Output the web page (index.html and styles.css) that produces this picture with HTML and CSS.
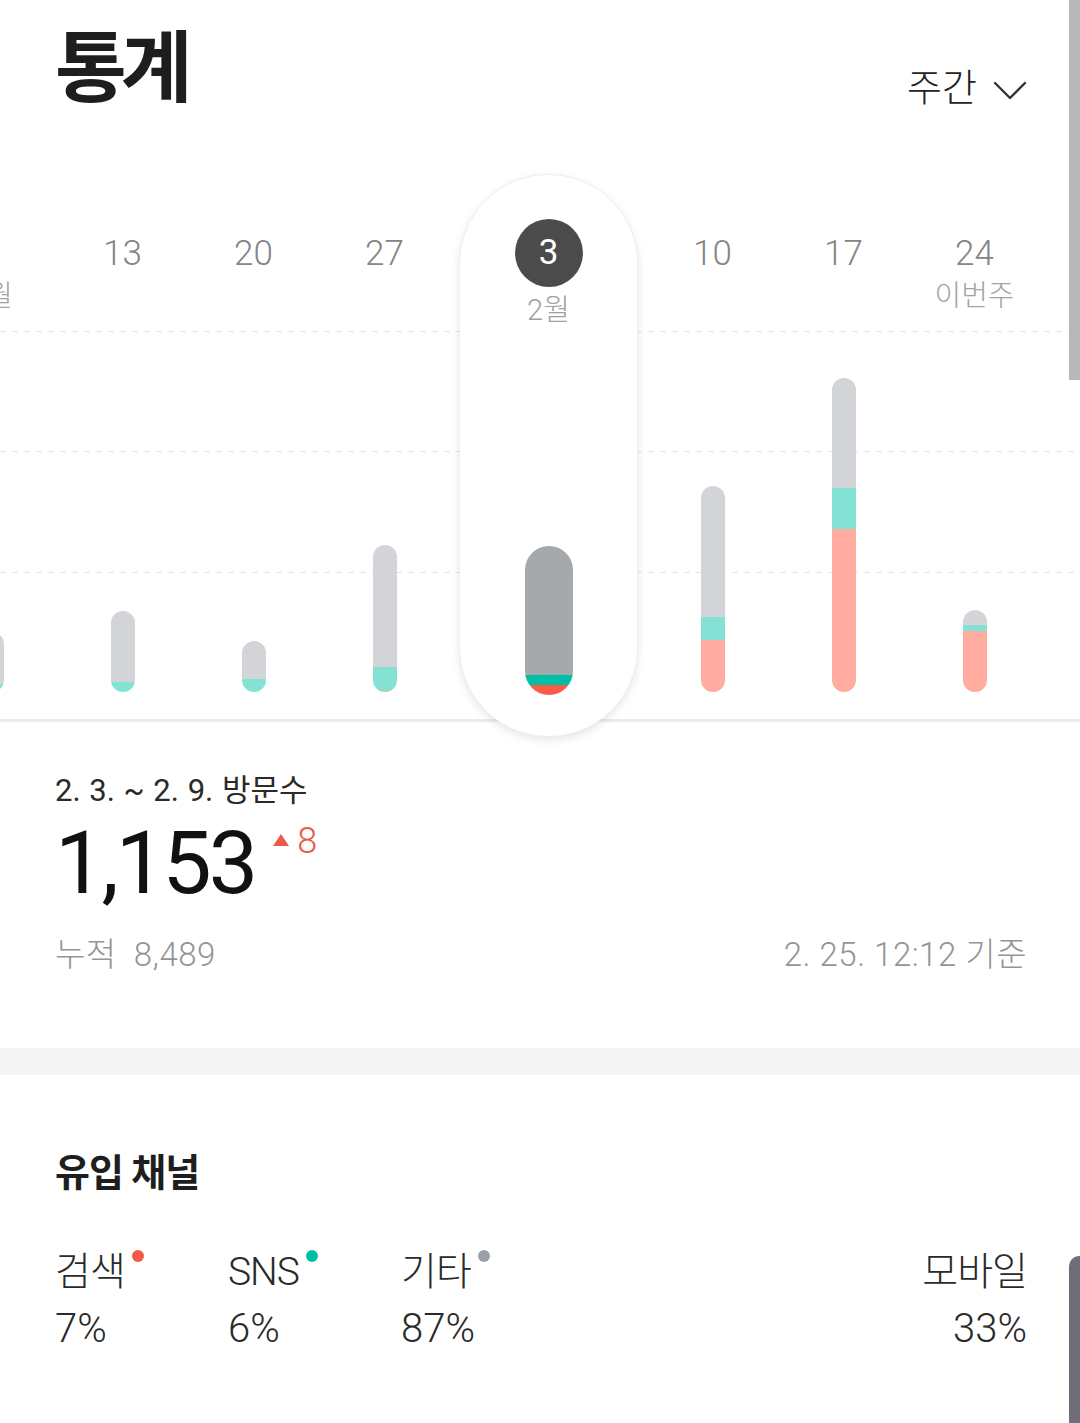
FILE: index.html
```html
<!DOCTYPE html>
<html lang="ko">
<head>
    <meta charset="UTF-8">
    <meta name="viewport" content="width=device-width, initial-scale=1.0">
    <title>통계</title>
    <link rel="stylesheet" href="styles.css">
</head>
<body>
    <header class="top">
        <h1 class="title">통계</h1>
        <button class="period">
            주간
            <svg class="chevron" width="34" height="20" viewBox="0 0 34 20">
                <polyline points="2,2 17,17 32,2" fill="none" stroke="#333" stroke-width="2.4" stroke-linecap="round" stroke-linejoin="round"/>
            </svg>
        </button>
    </header>

    <section class="chart">
        <div class="weeks">
            <div class="week">
                <div class="week-label"><span class="day">6</span><span class="month">1월</span></div>
                <div class="plot">
                    <div class="bar"><i class="seg etc" style="height:52px"></i><i class="seg sns" style="height:8px"></i></div>
                </div>
            </div>
            <div class="week">
                <div class="week-label"><span class="day">13</span></div>
                <div class="plot">
                    <div class="bar"><i class="seg etc" style="height:71px"></i><i class="seg sns" style="height:10px"></i></div>
                </div>
            </div>
            <div class="week">
                <div class="week-label"><span class="day">20</span></div>
                <div class="plot">
                    <div class="bar"><i class="seg etc" style="height:38px"></i><i class="seg sns" style="height:13px"></i></div>
                </div>
            </div>
            <div class="week">
                <div class="week-label"><span class="day">27</span></div>
                <div class="plot">
                    <div class="bar"><i class="seg etc" style="height:122px"></i><i class="seg sns" style="height:24px"></i><i class="seg search" style="height:1px"></i></div>
                </div>
            </div>
            <div class="week current">
                <div class="week-label"><span class="day">3</span><span class="month">2월</span></div>
                <div class="plot">
                    <div class="bar"><i class="seg etc" style="height:129px"></i><i class="seg sns" style="height:10px"></i><i class="seg search" style="height:10px"></i></div>
                </div>
            </div>
            <div class="week">
                <div class="week-label"><span class="day">10</span></div>
                <div class="plot">
                    <div class="bar"><i class="seg etc" style="height:131px"></i><i class="seg sns" style="height:23px"></i><i class="seg search" style="height:52px"></i></div>
                </div>
            </div>
            <div class="week">
                <div class="week-label"><span class="day">17</span></div>
                <div class="plot">
                    <div class="bar"><i class="seg etc" style="height:110px"></i><i class="seg sns" style="height:41px"></i><i class="seg search" style="height:163px"></i></div>
                </div>
            </div>
            <div class="week">
                <div class="week-label"><span class="day">24</span><span class="month">이번주</span></div>
                <div class="plot">
                    <div class="bar"><i class="seg etc" style="height:15px"></i><i class="seg sns" style="height:6px"></i><i class="seg search" style="height:61px"></i></div>
                </div>
            </div>
        </div>
    </section>

    <section class="summary">
        <p class="range">2. 3. ~ 2. 9. 방문수</p>
        <div class="visits">
            <span class="count">1,153</span>
            <span class="delta">
                <svg class="up" width="16" height="12" viewBox="0 0 16 12"><polygon points="8,0 16,12 0,12" fill="#ec5a46"/></svg>
                8
            </span>
        </div>
        <div class="meta">
            <span>누적&nbsp; 8,489</span>
            <span>2. 25. 12:12 기준</span>
        </div>
    </section>

    <div class="divider"></div>

    <section class="channels">
        <h2 class="section-title">유입 채널</h2>
        <ul class="channel-list">
            <li class="channel"><span class="name dot search">검색</span><span class="pct">7%</span></li>
            <li class="channel"><span class="name dot sns">SNS</span><span class="pct">6%</span></li>
            <li class="channel"><span class="name dot etc">기타</span><span class="pct">87%</span></li>
            <li class="channel mobile"><span class="name">모바일</span><span class="pct">33%</span></li>
        </ul>
    </section>

    <div class="scrollbar"></div>
    <div class="edge-handle"></div>
</body>
</html>
```

FILE: styles.css
```css
html, body {
    margin: 0;
    padding: 0;
}
body {
    font-family: Roboto, "Noto Sans CJK KR", sans-serif;
    background-color: #fff;
    color: #222;
    overflow-x: hidden;
}

/* header */
.top {
    height: 174px;
    box-sizing: border-box;
    padding: 30px 53px 0 55px;
    display: flex;
    justify-content: space-between;
    align-items: flex-start;
}
.title {
    margin: 0;
    font-size: 78px;
    line-height: 80px;
    font-weight: 700;
    letter-spacing: -6px;
    color: #1e1e1e;
}
.period {
    margin-top: 39px;
    padding: 0;
    border: none;
    background: none;
    font-family: inherit;
    font-size: 38px;
    line-height: 38px;
    font-weight: 300;
    color: #222;
    display: flex;
    align-items: center;
    gap: 16px;
}
.chevron {
    margin-top: 6px;
}

/* chart */
.chart {
    border-bottom: 3px solid #ececec;
    background-image:
        linear-gradient(to right, #e4e4e4 0 6px, transparent 6px 12px),
        linear-gradient(to right, #e4e4e4 0 6px, transparent 6px 12px),
        linear-gradient(to right, #e4e4e4 0 6px, transparent 6px 12px);
    background-size: 12px 1px;
    background-repeat: repeat-x;
    background-position: 0 157px, 0 277px, 0 398px;
}
.weeks {
    display: flex;
    align-items: flex-start;
    margin-left: -74px;
}
.week {
    flex: 0 0 131px;
    height: 545px;
    display: flex;
    flex-direction: column;
    align-items: center;
}
.week-label {
    height: 157px;
    box-sizing: border-box;
    padding-top: 58px;
    display: flex;
    flex-direction: column;
    align-items: center;
}
.day {
    font-size: 35px;
    line-height: 44px;
    font-weight: 300;
    color: #858585;
}
.month {
    font-size: 29px;
    line-height: 40px;
    font-weight: 300;
    color: #a3a3a3;
    white-space: nowrap;
}
.plot {
    flex: 1;
    display: flex;
    align-items: flex-end;
    padding-bottom: 27px;
}
.bar {
    width: 24px;
    border-radius: 12px;
    overflow: hidden;
    display: flex;
    flex-direction: column;
}
.seg {
    display: block;
}
.seg.etc { background: #d2d4d7; }
.seg.sns { background: #84e2d4; }
.seg.search { background: #ffaba0; }

.week.current {
    flex: 0 0 179px;
    height: 563px;
    margin: 0 9px -18px;
    box-sizing: border-box;
    background: #fff;
    border: 1px solid #efefef;
    border-radius: 90px;
    box-shadow: 0 3px 8px rgba(0, 0, 0, 0.1);
    position: relative;
    z-index: 1;
}
.week.current .week-label {
    padding-top: 44px;
}
.week.current .day {
    width: 68px;
    height: 68px;
    border-radius: 50%;
    background: #4b4b4b;
    color: #fff;
    line-height: 68px;
    text-align: center;
    font-weight: 400;
}
.week.current .month {
    margin-top: 3px;
    color: #a0a0a0;
}
.week.current .plot {
    padding-bottom: 41px;
}
.week.current .bar {
    width: 48px;
    border-radius: 24px;
}
.week.current .seg.etc { background: #a5a9ac; }
.week.current .seg.sns { background: #00bfa5; }
.week.current .seg.search { background: #fb5a45; }

/* summary */
.summary {
    height: 326px;
    box-sizing: border-box;
    padding: 51px 53px 0 55px;
}
.range {
    margin: 0;
    font-size: 31px;
    line-height: 36px;
    color: #2a2a2a;
    word-spacing: 1px;
}
.visits {
    display: flex;
    align-items: flex-start;
    margin-top: 10px;
}
.count {
    font-size: 88px;
    line-height: 88px;
    font-weight: 400;
    letter-spacing: -3px;
    color: #111;
}
.delta {
    margin: 4px 0 0 18px;
    display: flex;
    align-items: flex-start;
    gap: 8px;
    font-size: 36px;
    line-height: 36px;
    font-weight: 300;
    color: #ec5a46;
}
.up {
    margin-top: 11px;
}
.meta {
    display: flex;
    justify-content: space-between;
    margin-top: 28px;
    font-size: 33px;
    line-height: 40px;
    font-weight: 300;
    letter-spacing: 0.5px;
    color: #959595;
}

.divider {
    height: 27px;
    background: #f5f5f5;
}

/* channels */
.channels {
    padding: 74px 53px 0 55px;
}
.section-title {
    margin: 0;
    font-size: 38px;
    line-height: 48px;
    font-weight: 700;
    letter-spacing: -1px;
    color: #1e1e1e;
}
.channel-list {
    list-style: none;
    margin: 50px 0 0;
    padding: 0;
    display: flex;
}
.channel {
    width: 173px;
    display: flex;
    flex-direction: column;
}
.channel.mobile {
    margin-left: auto;
    width: auto;
    align-items: flex-end;
}
.name {
    font-size: 39px;
    line-height: 50px;
    font-weight: 300;
    letter-spacing: -1px;
    color: #2a2a2a;
}
.dot::after {
    content: "";
    display: inline-block;
    width: 12px;
    height: 12px;
    border-radius: 50%;
    margin-left: 7px;
    vertical-align: top;
    margin-top: 3px;
}
.dot.search::after { background: #f25a45; }
.dot.sns::after { background: #00bfa5; }
.dot.etc::after { background: #9aa0a6; }
.pct {
    margin-top: 7px;
    font-size: 40px;
    line-height: 50px;
    font-weight: 300;
    color: #2a2a2a;
}

/* overlay bars at the screen edge */
.scrollbar {
    position: fixed;
    top: 0;
    right: 0;
    width: 11px;
    height: 380px;
    background: #b8b8b8;
}
.edge-handle {
    position: fixed;
    top: 1256px;
    right: 0;
    bottom: 0;
    width: 11px;
    background: #6f6e78;
    border-top-left-radius: 10px;
}
```
